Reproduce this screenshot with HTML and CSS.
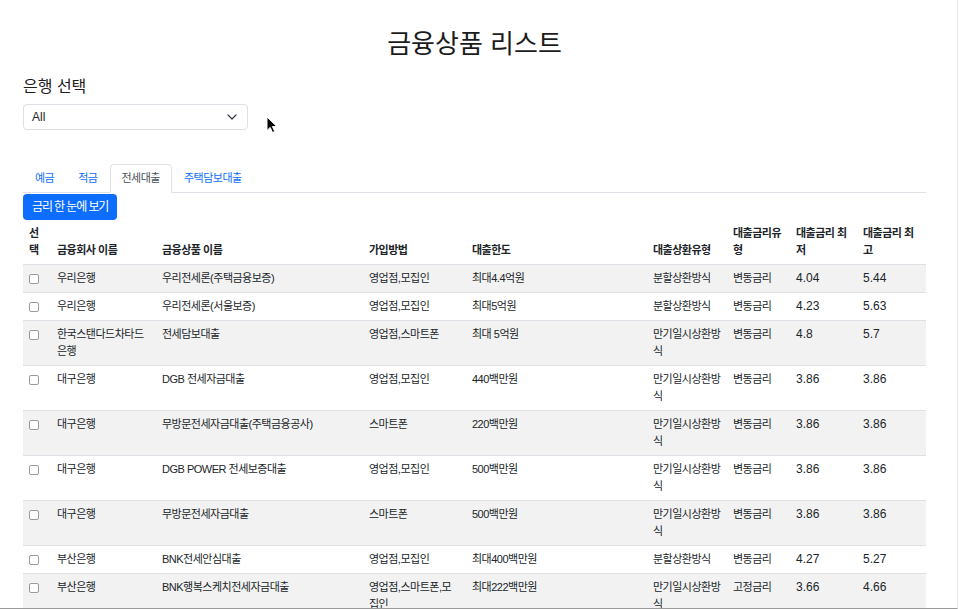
FILE: index.html
```html
<!DOCTYPE html>
<html lang="ko">
<head>
<meta charset="utf-8">
<title>금융상품 리스트</title>
<link rel="stylesheet" href="styles.css">
</head>
<body>
<div class="frame">
  <div class="container">
    <h1 class="title">금융상품 리스트</h1>
    <h2 class="label">은행 선택</h2>
    <div class="select">
      <span class="select-value">All</span>
      <svg class="chevron" width="10" height="6" viewBox="0 0 10 6"><path d="M1 1l4 4 4-4" fill="none" stroke="#343a40" stroke-width="1.2" stroke-linecap="round" stroke-linejoin="round"/></svg>
    </div>
    <ul class="tabs">
      <li><a class="tab">예금</a></li>
      <li><a class="tab">적금</a></li>
      <li><a class="tab active">전세대출</a></li>
      <li><a class="tab">주택담보대출</a></li>
    </ul>
    <div class="btn-row"><span class="btn" role="button">금리 한 눈에 보기</span></div>
    <table class="tbl">
      <colgroup>
        <col class="c1"><col class="c2"><col class="c3"><col class="c4"><col class="c5"><col class="c6"><col class="c7"><col class="c8"><col class="c9">
      </colgroup>
      <thead>
        <tr>
          <th>선택</th><th>금융회사 이름</th><th>금융상품 이름</th><th class="p4">가입방법</th><th>대출한도</th><th>대출상환유형</th><th>대출금리유형</th><th>대출금리 최저</th><th>대출금리 최고</th>
        </tr>
      </thead>
      <tbody>
        <tr><td><input type="checkbox" class="chk"></td><td>우리은행</td><td>우리전세론(주택금융보증)</td><td class="p4">영업점,모집인</td><td>최대4.4억원</td><td>분할상환방식</td><td>변동금리</td><td class="num">4.04</td><td class="num">5.44</td></tr>
        <tr><td><input type="checkbox" class="chk"></td><td>우리은행</td><td>우리전세론(서울보증)</td><td class="p4">영업점,모집인</td><td>최대5억원</td><td>분할상환방식</td><td>변동금리</td><td class="num">4.23</td><td class="num">5.63</td></tr>
        <tr><td><input type="checkbox" class="chk"></td><td>한국스탠다드차타드은행</td><td>전세담보대출</td><td class="p4">영업점,스마트폰</td><td>최대 5억원</td><td>만기일시상환방식</td><td>변동금리</td><td class="num">4.8</td><td class="num">5.7</td></tr>
        <tr><td><input type="checkbox" class="chk"></td><td>대구은행</td><td>DGB 전세자금대출</td><td class="p4">영업점,모집인</td><td>440백만원</td><td>만기일시상환방식</td><td>변동금리</td><td class="num">3.86</td><td class="num">3.86</td></tr>
        <tr><td><input type="checkbox" class="chk"></td><td>대구은행</td><td>무방문전세자금대출(주택금융공사)</td><td class="p4">스마트폰</td><td>220백만원</td><td>만기일시상환방식</td><td>변동금리</td><td class="num">3.86</td><td class="num">3.86</td></tr>
        <tr><td><input type="checkbox" class="chk"></td><td>대구은행</td><td>DGB POWER 전세보증대출</td><td class="p4">영업점,모집인</td><td>500백만원</td><td>만기일시상환방식</td><td>변동금리</td><td class="num">3.86</td><td class="num">3.86</td></tr>
        <tr><td><input type="checkbox" class="chk"></td><td>대구은행</td><td>무방문전세자금대출</td><td class="p4">스마트폰</td><td>500백만원</td><td>만기일시상환방식</td><td>변동금리</td><td class="num">3.86</td><td class="num">3.86</td></tr>
        <tr><td><input type="checkbox" class="chk"></td><td>부산은행</td><td>BNK전세안심대출</td><td class="p4">영업점,모집인</td><td>최대400백만원</td><td>분할상환방식</td><td>변동금리</td><td class="num">4.27</td><td class="num">5.27</td></tr>
        <tr><td><input type="checkbox" class="chk"></td><td>부산은행</td><td>BNK행복스케치전세자금대출</td><td class="p4">영업점,스마트폰,모집인</td><td>최대222백만원</td><td>만기일시상환방식</td><td>고정금리</td><td class="num">3.66</td><td class="num">4.66</td></tr>
      </tbody>
    </table>
  </div>
  <svg class="cursor" width="12" height="18" viewBox="0 0 12 18"><path d="M1 1v13.5l3.2-3.1 2.3 5.1 2.2-1-2.3-5h4.4z" fill="#000" stroke="#fff" stroke-width="1" stroke-linejoin="round"/></svg>
</div>
</body>
</html>
```

FILE: styles.css
```css
html, body {
  margin: 0;
  padding: 0;
  background: #fff;
}
body {
  font-family: "Liberation Sans", "Noto Sans CJK KR", sans-serif;
  font-size: 11px;
  letter-spacing: -0.5px;
  color: #212529;
}
.frame {
  position: relative;
  width: 958px;
  height: 609px;
  box-sizing: border-box;
  border-right: 1px solid #e6e6e6;
  border-bottom: 1px solid #9a9a9a;
  overflow: hidden;
}
.container {
  padding-left: 23px;
  width: 903px;
}
.title {
  margin: 0;
  padding-top: 29px;
  font-size: 26px;
  line-height: 30px;
  letter-spacing: 0;
  font-weight: 400;
  text-align: center;
  color: #1c1c1c;
}
.label {
  margin: 18px 0 0;
  font-size: 16px;
  line-height: 20px;
  letter-spacing: 0;
  font-weight: 400;
  color: #1c1c1c;
}
.select {
  margin-top: 7px;
  width: 225px;
  height: 26px;
  box-sizing: border-box;
  border: 1px solid #dcdfe3;
  border-radius: 4px;
  display: flex;
  align-items: center;
  justify-content: space-between;
  padding: 0 10px 0 8px;
  font-size: 12px;
  letter-spacing: 0;
}
.chevron {
  display: block;
}
.tabs {
  list-style: none;
  margin: 34px 0 0;
  padding: 0;
  display: flex;
  border-bottom: 1px solid #dee2e6;
}
.tab {
  display: block;
  padding: 6px 11px;
  line-height: 15px;
  border: 1px solid transparent;
  border-radius: 4px 4px 0 0;
  margin-bottom: -1px;
  color: #0d6efd;
  font-size: 11px;
}
.tab.active {
  color: #495057;
  background: #fff;
  border-color: #dee2e6 #dee2e6 #fff;
}
.btn-row {
  display: flex;
  margin-top: 1px;
}
.btn {
  display: block;
  height: 26px;
  padding: 0 9px;
  border-radius: 4px;
  background: #0d6efd;
  color: #fff;
  font-size: 12px;
  letter-spacing: -1.1px;
  line-height: 26px;
  white-space: nowrap;
}
.tbl {
  width: 903px;
  table-layout: fixed;
  border-collapse: collapse;
}
.c1 { width: 28px; }
.c2 { width: 105px; }
.c3 { width: 207px; }
.c4 { width: 103px; }
.c5 { width: 181px; }
.c6 { width: 80px; }
.c7 { width: 63px; }
.c8 { width: 67px; }
.c9 { width: 69px; }
.tbl th,
.tbl td {
  padding: 5px 6px;
  line-height: 17px;
  text-align: left;
  border-bottom: 1px solid #dee2e6;
}
.tbl th {
  vertical-align: bottom;
  font-weight: 700;
}
.tbl td {
  vertical-align: top;
}
.tbl td.p4,
.tbl th.p4 {
  padding-right: 7px;
}
.tbl tbody tr:nth-child(odd) td {
  background: #f2f2f2;
}
.tbl td.num {
  font-size: 12px;
  letter-spacing: 0;
}
.chk {
  appearance: none;
  -webkit-appearance: none;
  display: block;
  width: 10px;
  height: 10px;
  margin: 4px 0 0;
  border: 1px solid #9b9b9b;
  border-radius: 2px;
  background: #fff;
}
.cursor {
  position: absolute;
  left: 266px;
  top: 116px;
}
```
